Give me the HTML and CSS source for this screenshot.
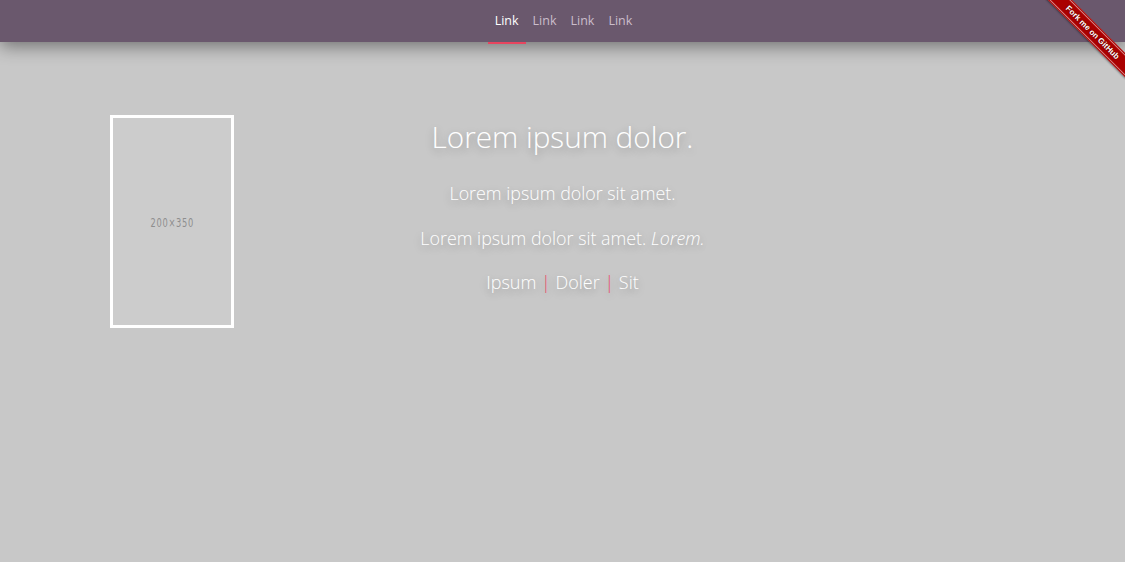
FILE: index.html
```html
<!DOCTYPE html>
<html>
<head>
<meta charset="utf-8">
<link rel="stylesheet" href="styles.css">
</head>
<body>
<nav class="navbar">
  <ul class="nav-links">
    <li><a class="nav-link active" href="#">Link</a></li>
    <li><a class="nav-link" href="#">Link</a></li>
    <li><a class="nav-link" href="#">Link</a></li>
    <li><a class="nav-link" href="#">Link</a></li>
  </ul>
</nav>
<div class="ribbon-wrap">
  <a class="ribbon" href="#">Fork me on GitHub</a>
</div>
<main class="hero">
  <div class="thumb-col">
    <div class="thumb"><span class="thumb-label">200×350</span></div>
  </div>
  <div class="text-col">
    <h1 class="title">Lorem ipsum dolor.</h1>
    <p class="line">Lorem ipsum dolor sit amet.</p>
    <p class="line">Lorem ipsum dolor sit amet. <em>Lorem.</em></p>
    <p class="line links">Ipsum <span class="sep">|</span> Doler <span class="sep">|</span> Sit</p>
  </div>
  <div class="spacer-col"></div>
</main>
</body>
</html>
```
FILE: styles.css
```css
html, body {
  margin: 0;
  padding: 0;
}
body {
  background: #c8c8c8;
  font-family: "Open Sans", "Liberation Sans", sans-serif;
  height: 562px;
  overflow: hidden;
  position: relative;
}
.navbar {
  height: 42px;
  background: #6a586d;
  box-shadow: 0 4px 18px rgba(0, 0, 0, 0.45);
  display: flex;
  justify-content: center;
  position: relative;
  z-index: 2;
}
.nav-links {
  list-style: none;
  margin: 0 0 0 2px;
  padding: 0;
  display: flex;
}
.nav-link {
  display: block;
  height: 42px;
  line-height: 41px;
  padding: 0 7px;
  font-size: 12.5px;
  color: #cbbdcb;
  text-decoration: none;
  box-sizing: border-box;
}
.nav-link.active {
  color: #ffffff;
  border-bottom: 2px solid #e8455f;
  margin-bottom: -2px;
  height: 44px;
}
.ribbon-wrap {
  position: absolute;
  top: 0;
  right: 0;
  width: 80px;
  height: 80px;
  overflow: hidden;
  z-index: 3;
}
.ribbon {
  position: absolute;
  left: -18px;
  top: 24px;
  width: 131px;
  height: 17px;
  background: #aa0000;
  color: #ffffff;
  font-family: "Liberation Sans", Arial, sans-serif;
  font-weight: bold;
  font-size: 8px;
  line-height: 17px;
  text-align: center;
  text-decoration: none;
  transform: rotate(45deg);
  box-shadow: inset 0 1px 0 #aa0000, inset 0 2px 0 rgba(255,255,255,0.55), inset 0 -1px 0 #aa0000, inset 0 -2px 0 rgba(255,255,255,0.55), 0 1px 2px rgba(0,0,0,0.4);
  text-shadow: 0 0 2px rgba(0,0,0,0.6);
}
.hero {
  display: grid;
  grid-template-columns: 1fr auto 1fr;
  padding-top: 73px;
}
.thumb-col {
  padding-left: 110px;
}
.thumb {
  width: 118px;
  height: 207px;
  border: 3px solid #ffffff;
  background: #cccccc;
  display: flex;
  align-items: center;
  justify-content: center;
}
.thumb-label {
  font-family: "DejaVu Sans", sans-serif;
  font-size: 11.5px;
  letter-spacing: 1px;
  color: #8e8e8e;
  transform: scaleX(0.72);
  margin-top: 2px;
  margin-left: 1px;
}
.text-col {
  text-align: center;
  color: #ffffff;
  text-shadow: 0 3px 8px rgba(0, 0, 0, 0.28);
}
.title {
  font-weight: 300;
  font-size: 29.7px;
  line-height: 44px;
  margin: 0 0 22px 0;
  color: #ffffff;
}
.line {
  font-weight: 300;
  font-size: 17.85px;
  line-height: 24px;
  margin: 0 0 21px 0;
}
.line em {
  font-style: italic;
}
.links {
  font-size: 18px;
  margin-top: -1px;
}
.sep {
  color: #e8506a;
}
```
